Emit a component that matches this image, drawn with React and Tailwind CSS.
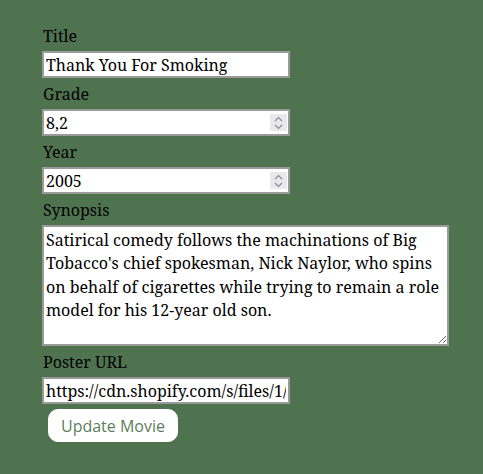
import React from "react";

function Spinner() {
  return (
    <div className="pointer-events-none absolute right-[3px] top-[5px] flex h-[17px] w-[17px] flex-col items-center justify-center bg-[#e9e9ed]">
      <svg width="9" height="14" viewBox="0 0 9 14" fill="none" stroke="#8a8a8f" strokeWidth="1.2">
        <path d="M1 5 L4.5 1.5 L8 5" />
        <path d="M1 9 L4.5 12.5 L8 9" />
      </svg>
    </div>
  );
}

const inputCls =
  "block h-[27px] border-2 border-[#9a9a9a] bg-white px-[2px] text-[16px] leading-[21px] text-black outline-none";

export default function App() {
  const serif = { fontFamily: "'Noto Serif', 'DejaVu Serif', serif" };
  return (
    <div className="min-h-[474px] w-full bg-[#4f734f] pl-[42px] pt-[25px] text-[16px] text-black" style={serif}>
      <div className="flex flex-col">
        <label className="ml-[1px] block h-[22px] leading-[22px]">Title</label>
        <input className={`${inputCls} mt-[4px] w-[248px]`} style={serif} defaultValue="Thank You For Smoking" />

        <label className="ml-[1px] mt-[5px] block h-[22px] leading-[22px]">Grade</label>
        <div className="relative mt-[4px] w-[248px]">
          <input className={`${inputCls} w-[248px]`} style={serif} defaultValue="8,2" />
          <Spinner />
        </div>

        <label className="ml-[1px] mt-[5px] block h-[22px] leading-[22px]">Year</label>
        <div className="relative mt-[4px] w-[248px]">
          <input className={`${inputCls} w-[248px]`} style={serif} defaultValue="2005" />
          <Spinner />
        </div>

        <label className="ml-[1px] mt-[5px] block h-[22px] leading-[22px]">Synopsis</label>
        <textarea
          className="mt-[4px] block h-[121px] w-[407px] resize-y border-2 border-[#9a9a9a] bg-white px-[2px] py-[2px] text-[16px] leading-[23.3px] text-black outline-none"
          style={serif}
          defaultValue="Satirical comedy follows the machinations of Big Tobacco's chief spokesman, Nick Naylor, who spins on behalf of cigarettes while trying to remain a role model for his 12-year old son."
        />

        <label className="ml-[1px] mt-[5px] block h-[22px] leading-[22px]">Poster URL</label>
        <input
          className={`${inputCls} mt-[4px] w-[248px]`}
          style={serif}
          defaultValue="https://cdn.shopify.com/s/files/1/0057/3728/3618/products/thankyouforsmoking.jpg"
        />

        <div className="mt-[5px]">
          <button
            className="ml-[6px] h-[33px] w-[130px] rounded-[10px] border border-white bg-white text-[16px] text-[#5c7d5c]"
            style={{ fontFamily: "'Open Sans', sans-serif" }}
          >
            Update Movie
          </button>
        </div>
      </div>
    </div>
  );
}
